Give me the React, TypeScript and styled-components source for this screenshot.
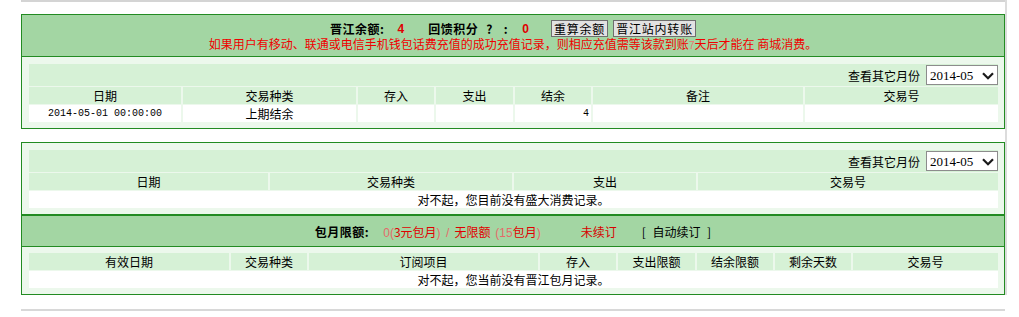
import React from 'react';
import styled, { createGlobalStyle } from 'styled-components';

const GlobalStyle = createGlobalStyle`
  html, body {
    margin: 0;
    padding: 0;
    background: #fff;
  }
  body {
    font-family: "Noto Sans CJK SC", "Noto Sans", sans-serif;
    font-size: 12px;
    color: #000;
  }
`;

const Page = styled.div`
  padding-left: 21px;
  width: 986px;
`;

const Frame = styled.div`
  width: 984px;
  border-right: 2px solid #dcdcdc;
`;

const PrevEdge = styled.div`
  height: 0;
  border-left: 1px solid #d0d0d0;
  border-bottom: 2px solid #d4d4d4;
  margin-bottom: 12px;
`;

const NextEdge = styled.div`
  width: 984px;
  margin-top: 14px;
  border-top: 2px solid #d8d8d8;
`;

const Panel = styled.section<{ $gap?: number }>`
  box-sizing: border-box;
  width: 984px;
  margin-top: ${p => p.$gap ?? 0}px;
  border: 1px solid #228b22;
  background: #ecf8ec;
`;

const PanelHeader = styled.header<{ $height: number }>`
  height: ${p => p.$height}px;
  background: #a3d6a3;
  border-bottom: 1px solid #228b22;
  display: flex;
  flex-direction: column;
  align-items: center;
  justify-content: center;
`;

const PanelBody = styled.div<{ $padTop: number }>`
  padding: ${p => p.$padTop}px 6px 6px 7px;
`;

const BalanceLine = styled.div`
  height: 17px;
  display: flex;
  align-items: center;
  white-space: pre;
`;

const Strong = styled.span<{ $left?: number }>`
  font-weight: bold;
  letter-spacing: 0.5px;
  margin-left: ${p => p.$left ?? 0}px;
`;

const Amount = styled.span<{ $left: number; $right: number }>`
  color: #e00000;
  font-weight: bold;
  font-family: "Liberation Sans", sans-serif;
  margin: 0 ${p => p.$right}px 0 ${p => p.$left}px;
`;

const Button = styled.button`
  box-sizing: border-box;
  height: 17px;
  margin: 0 0 0 5px;
  padding: 0 2px;
  border: 1px solid #6e6e6e;
  border-radius: 0;
  background: #e2e2e2;
  font-family: "Noto Sans CJK SC", sans-serif;
  font-size: 12px;
  letter-spacing: 0.8px;
  line-height: 14px;
  color: #000;
  overflow: hidden;
  &:first-of-type {
    margin-left: 0;
  }
`;

const Warning = styled.div`
  height: 14px;
  line-height: 14px;
  color: #f00000;
  white-space: pre;
`;

const Seven = styled.span`
  color: #f07070;
  font-size: 10px;
  font-family: "Liberation Sans", sans-serif;
`;

const QuotaLine = styled.div`
  display: flex;
  align-items: center;
  white-space: pre;
`;

const Quota = styled.span`
  margin-left: 14px;
  color: #e00000;
  word-spacing: 2px;
`;

const Thin = styled.span`
  color: #e56a6a;
  font-family: "Liberation Sans", sans-serif;
`;

const Status = styled.span`
  margin-left: 40px;
  color: #d80000;
`;

const AutoRenew = styled.span`
  margin-left: 25px;
  word-spacing: 4px;
`;

const Grid = styled.div<{ $cols: string }>`
  display: grid;
  grid-template-columns: ${p => p.$cols};
  gap: 1px 2px;
`;

const Toolbar = styled.div`
  grid-column: 1 / -1;
  height: 22px;
  background: #d6f1d6;
  display: flex;
  align-items: center;
  justify-content: flex-end;
  gap: 6px;
`;

const HeadCell = styled.div`
  height: 17px;
  line-height: 17px;
  background: #d6f1d6;
  text-align: center;
`;

const DataCell = styled.div<{ $align?: 'center' | 'right'; $mono?: boolean }>`
  height: 17px;
  line-height: 17px;
  background: #fff;
  text-align: ${p => p.$align ?? 'center'};
  padding-right: ${p => (p.$align === 'right' ? '2px' : '0')};
  ${p => (p.$mono ? 'font-family: "Liberation Mono", monospace; font-size: 10px;' : '')}
`;

const EmptyRow = styled.div`
  grid-column: 1 / -1;
  height: 17px;
  line-height: 17px;
  background: #fff;
  text-align: center;
`;

const SelectWrap = styled.span`
  position: relative;
  display: inline-block;
  height: 20px;
`;

const MonthSelect = styled.select`
  appearance: none;
  box-sizing: border-box;
  width: 72px;
  height: 20px;
  padding: 0 0 0 3px;
  border: 1px solid #8c8c8c;
  border-radius: 0;
  background: #fff;
  color: #000;
  font-family: "Liberation Serif", serif;
  font-size: 13px;
`;

const Chevron = styled.svg`
  position: absolute;
  right: 4px;
  top: 7px;
  pointer-events: none;
`;

function MonthPicker() {
  return (
    <Toolbar>
      <span>查看其它月份</span>
      <SelectWrap>
        <MonthSelect defaultValue="2014-05">
          <option value="2014-05">2014-05</option>
        </MonthSelect>
        <Chevron width="12" height="8" viewBox="0 0 12 8">
          <path d="M1 1.2 L6 6.2 L11 1.2" fill="none" stroke="#1a1a1a" strokeWidth="2.2" />
        </Chevron>
      </SelectWrap>
    </Toolbar>
  );
}

const balanceCols = ['日期', '交易种类', '存入', '支出', '结余', '备注', '交易号'];
const shandaCols = ['日期', '交易种类', '支出', '交易号'];
const monthlyCols = ['有效日期', '交易种类', '订阅项目', '存入', '支出限额', '结余限额', '剩余天数', '交易号'];

export default function App() {
  return (
    <Page>
      <GlobalStyle />
      <Frame>
        <PrevEdge />

        <Panel>
          <PanelHeader $height={41}>
            <BalanceLine>
              <Strong>晋江余额:</Strong>
              <Amount $left={13} $right={24}>4</Amount>
              <Strong>回馈积分</Strong>
              <Strong $left={8}>?</Strong>
              <Strong $left={11}>:</Strong>
              <Amount $left={14} $right={22}>0</Amount>
              <Button>重算余额</Button>
              <Button>晋江站内转账</Button>
            </BalanceLine>
            <Warning>
              如果用户有移动、联通或电信手机钱包话费充值的成功充值记录，则相应充值需等该款到账<Seven>7</Seven>天后才能在 商城消费。
            </Warning>
          </PanelHeader>
          <PanelBody $padTop={7}>
            <Grid $cols="152px 173px 76px 77px 76px 210px 193px">
              <MonthPicker />
              {balanceCols.map(c => (
                <HeadCell key={c}>{c}</HeadCell>
              ))}
              <DataCell $mono>2014-05-01 00:00:00</DataCell>
              <DataCell>上期结余</DataCell>
              <DataCell />
              <DataCell />
              <DataCell $align="right" $mono>4</DataCell>
              <DataCell />
              <DataCell />
            </Grid>
          </PanelBody>
        </Panel>

        <Panel $gap={13}>
          <PanelBody $padTop={7}>
            <Grid $cols="239px 242px 182px 300px">
              <MonthPicker />
              {shandaCols.map(c => (
                <HeadCell key={c}>{c}</HeadCell>
              ))}
              <EmptyRow>对不起，您目前没有盛大消费记录。</EmptyRow>
            </Grid>
          </PanelBody>
        </Panel>

        <Panel>
          <PanelHeader $height={30}>
            <QuotaLine>
              <Strong>包月限额:</Strong>
              <Quota>
                <Thin>0(</Thin>3元包月<Thin>) / </Thin>无限额 <Thin>(15</Thin>包月<Thin>)</Thin>
              </Quota>
              <Status>未续订</Status>
              <AutoRenew>[ 自动续订 ]</AutoRenew>
            </QuotaLine>
          </PanelHeader>
          <PanelBody $padTop={6}>
            <Grid $cols="200px 76px 229px 76px 77px 76px 76px 145px">
              {monthlyCols.map(c => (
                <HeadCell key={c}>{c}</HeadCell>
              ))}
              <EmptyRow>对不起，您当前没有晋江包月记录。</EmptyRow>
            </Grid>
          </PanelBody>
        </Panel>
      </Frame>
      <NextEdge />
    </Page>
  );
}
